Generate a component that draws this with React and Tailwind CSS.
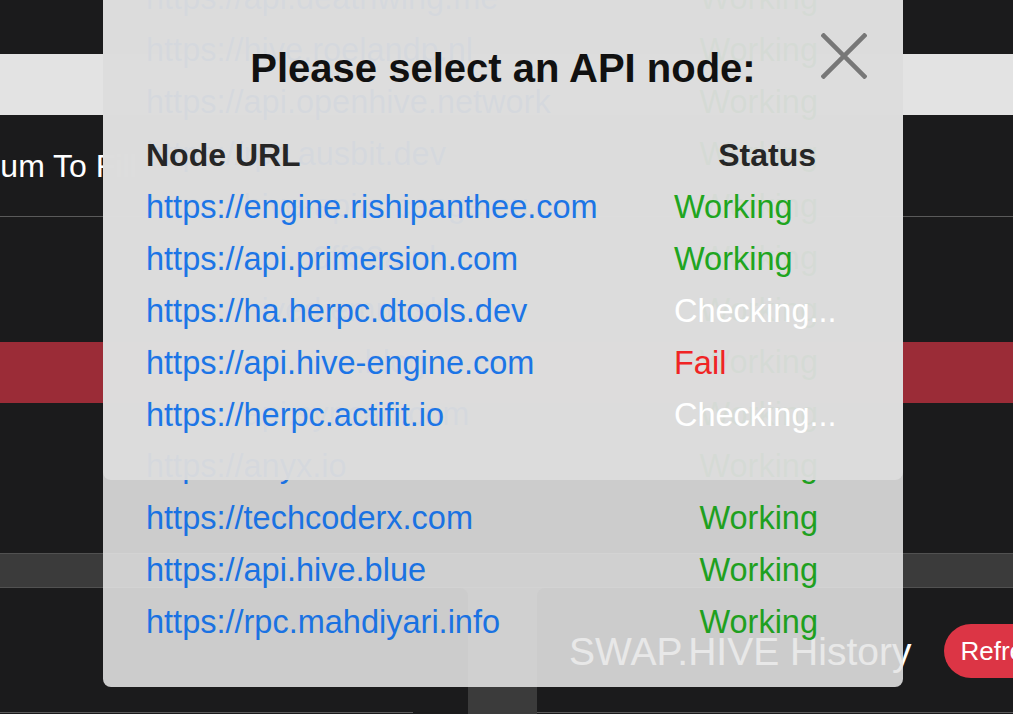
import React from "react";

const bgRows = [
  "https://api.deathwing.me",
  "https://hive.roelandp.nl",
  "https://api.openhive.network",
  "https://rpc.ausbit.dev",
  "https://hive-api.arcange.eu",
  "https://api.c0ff33a.uk",
  "https://hived.emre.sh",
  "https://api.hive.blog",
  "https://api.syncad.com",
  "https://anyx.io",
  "https://techcoderx.com",
  "https://api.hive.blue",
  "https://rpc.mahdiyari.info",
];

const fgRows = [
  { url: "https://engine.rishipanthee.com", status: "Working" },
  { url: "https://api.primersion.com", status: "Working" },
  { url: "https://ha.herpc.dtools.dev", status: "Checking..." },
  { url: "https://api.hive-engine.com", status: "Fail" },
  { url: "https://herpc.actifit.io", status: "Checking..." },
];

function statusClass(s) {
  if (s === "Working") return "text-[#20a520]";
  if (s === "Fail") return "text-[#f02424]";
  return "text-white";
}

export default function App() {
  return (
    <div className="relative w-[1013px] h-[714px] overflow-hidden bg-[#1b1b1c] font-['Liberation_Sans',Arial,sans-serif]">
      {/* Page underneath */}
      <div className="flex flex-col">
        <div className="h-[54px]" />
        <div className="h-[61px] bg-[#e3e3e3]" />
        <div className="h-[101px] flex items-center text-white text-[32px]">
          <span className="ml-[-85px] whitespace-nowrap">Minimum To Fill</span>
        </div>
        <div className="h-px bg-[#5a5a5a]" />
        <div className="h-[125px]" />
        <div className="h-[61px] bg-[#9b2c37]" />
        <div className="h-[150px]" />
        <div className="h-[35px] bg-[#3b3b3b] border-y border-[#515151]" />
        <div className="h-[126px] bg-[#3b3b3b] flex gap-[69px]">
          <div className="w-[468px] shrink-0 bg-[#1b1b1c] rounded-tr-lg flex flex-col">
            <div className="mt-auto mb-[1px] w-[413px] h-px bg-[#5a5a5a]" />
          </div>
          <div className="flex-1 min-w-[476px] bg-[#1b1b1c] rounded-tl-lg flex flex-col">
            <div className="flex items-center gap-[33px] pl-[32px] pt-[36px] h-[90px]">
              <span className="text-white text-[39px] leading-none whitespace-nowrap">SWAP.HIVE History</span>
              <span className="h-[54px] rounded-full bg-[#dc3545] text-white text-[26px] flex items-center px-[16px] whitespace-nowrap">
                Refresh
              </span>
            </div>
            <div className="mt-auto mb-[1px] h-px bg-[#5a5a5a]" />
          </div>
        </div>
      </div>

      {/* Lower (full list) modal */}
      <div className="absolute left-[103px] top-[-28px] w-[800px] h-[715px] rounded-b-lg bg-[rgba(229,229,229,0.88)] flex flex-col pl-[43px] pr-[85px]">
        {bgRows.map((u) => (
          <div key={u} className="h-[52px] shrink-0 flex items-center justify-between text-[32.5px] whitespace-nowrap">
            <span className="text-[#1a72e2]">{u}</span>
            <span className="text-[#1fa01f]">Working</span>
          </div>
        ))}
      </div>

      {/* Upper (checking) modal */}
      <div className="absolute left-[103px] top-0 w-[800px] h-[480px] rounded-b-lg bg-[rgba(221,221,221,0.96)] flex flex-col pl-[43px] pt-[44px]">
        <div className="h-[48px] flex items-center justify-center pr-[43px] text-[40px] font-bold text-[#111] whitespace-nowrap">
          Please select an API node:
        </div>
        <button className="absolute left-[718px] top-[33px] w-[46px] h-[46px]">
          <svg width="46" height="46" viewBox="0 0 46 46">
            <path d="M1 1 L45 45 M45 1 L1 45" stroke="#777" strokeWidth="4.5" fill="none" />
          </svg>
        </button>
        <div className="mt-[37px] grid grid-cols-[528px_142px] text-[32.5px] whitespace-nowrap">
          <div className="h-[52px] flex items-center font-bold text-[32px] text-[#262626]">Node URL</div>
          <div className="h-[52px] flex items-center justify-end font-bold text-[32px] text-[#262626]">Status</div>
          {fgRows.map((r) => (
            <React.Fragment key={r.url}>
              <div className="h-[52px] flex items-center text-[#1c75e6]">{r.url}</div>
              <div className={"h-[52px] flex items-center " + statusClass(r.status)}>{r.status}</div>
            </React.Fragment>
          ))}
        </div>
      </div>
    </div>
  );
}
